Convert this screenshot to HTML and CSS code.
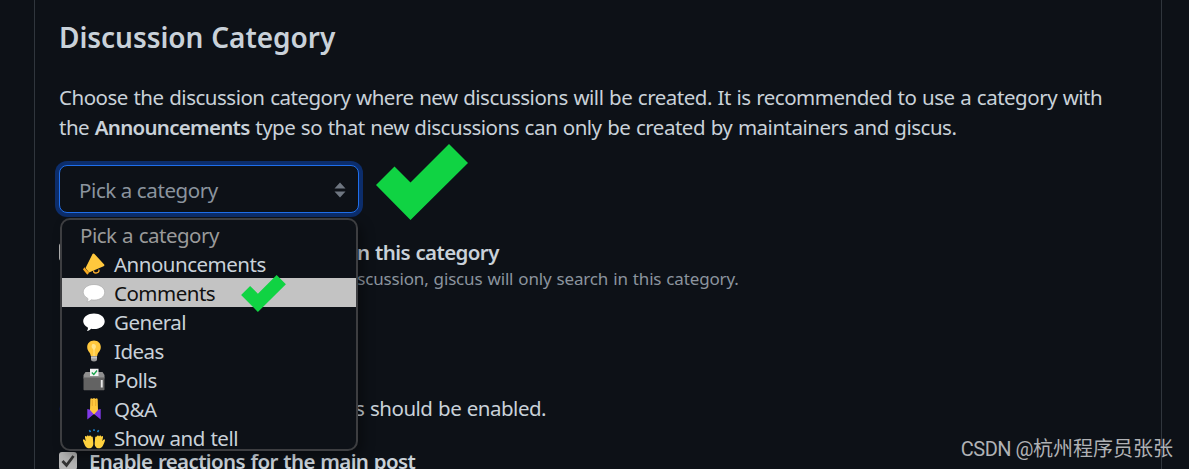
FILE: index.html
```html
<!DOCTYPE html>
<html lang="en">
<head>
    <meta charset="UTF-8">
    <meta name="viewport" content="width=device-width, initial-scale=1.0">
    <title>giscus</title>
    <link rel="stylesheet" href="styles.css">
</head>
<body>
    <main class="container">
        <h2>Discussion Category</h2>
        <p class="intro">
            Choose the discussion category where new discussions will be created. It is recommended to use a category with<br>
            the <strong>Announcements</strong> type so that new discussions can only be created by maintainers and giscus.
        </p>

        <div class="picker">
            <button class="select" type="button">
                <span>Pick a category</span>
                <svg class="arrows" width="12" height="16" viewBox="0 0 12 16"><path d="M0.5 6.5 6 0.5l5.5 6zM0.5 9.5h11L6 15.5z" fill="#6e7681"/></svg>
            </button>
            <ul class="menu">
                <li class="placeholder">Pick a category</li>
                <li>
                    <!-- megaphone -->
                    <svg class="emoji" viewBox="0 0 24 24"><path d="M10.500 2c.5-.8 1.500-.7 2 .1l9.700 10.400c.5.800.2 1.500-.6 1.700L7 20.500 3.500 16z" fill="#ffc83d"/><path d="m2.300 15.200 4.800 5.500-1.800 2L1 17.500z" fill="#f9a91e"/><path d="m11.500 18.500.3 1.700c1.500 1.400 4.600.8 5.200-1.200l-.2-1.500" fill="none" stroke="#ffb02e" stroke-width="1.300"/></svg>
                    <span>Announcements</span>
                </li>
                <li class="active">
                    <svg class="emoji" viewBox="0 0 24 24"><path d="M12 3.500c6 0 10.700 3.400 10.700 7.700 0 4.600-4.700 7.900-10.700 7.900-1 0-2-.1-2.900-.3-1 1.200-2.500 2-4.300 2.100 1-1 1.400-2.200 1-3.500C3 15.900 1.200 13.500 1.200 11.200c0-4.300 4.800-7.700 10.800-7.700z" fill="#fff" stroke="#aaa" stroke-width=".7"/></svg>
                    <span>Comments</span>
                    <svg class="tick small" viewBox="0 0 92 76"><path d="M0 41 18.500 22.500 34.500 38.500 73 0 92 19 34.500 76z" fill="#10d343"/></svg>
                </li>
                <li>
                    <svg class="emoji" viewBox="0 0 24 24"><path d="M12 3.500c6 0 10.700 3.400 10.700 7.700 0 4.600-4.700 7.900-10.700 7.900-1 0-2-.1-2.900-.3-1 1.200-2.500 2-4.300 2.100 1-1 1.400-2.200 1-3.500C3 15.900 1.200 13.500 1.200 11.200c0-4.300 4.800-7.700 10.800-7.700z" fill="#fff"/></svg>
                    <span>General</span>
                </li>
                <li>
                    <!-- light bulb -->
                    <svg class="emoji" viewBox="0 0 24 24"><path d="M12 1.500c4 0 6.800 2.900 6.800 6.500 0 4.200-3.200 5.200-3.600 9H8.800C8.400 13.200 5.200 12.200 5.200 8c0-3.600 2.800-6.500 6.800-6.500z" fill="#ffc83d"/><path d="M10 5.500c2-1 4 0 4 2.500l-1.500 3v6h-1v-6L9.500 8z" fill="#ffe48a"/><path d="M9 17h6v3.500c0 1-1 2-3 2s-3-1-3-2z" fill="#9b9b9b"/><path d="M9 18.800h6" stroke="#d8d8d8"/></svg>
                    <span>Ideas</span>
                </li>
                <li>
                    <!-- ballot box -->
                    <svg class="emoji" viewBox="0 0 24 24"><path d="M1.500 7 3.500 4h17l2 3v3.500h-21z" fill="#8f8f8f"/><path d="M1.500 9.500h21v11.800c0 .6-.4 1-1 1h-19c-.6 0-1-.4-1-1z" fill="#636363"/><path d="M18.800 12h1.900v7.500h-1.900z" fill="#e8e8e8"/><path d="M8 .8h8.500V8H8z" fill="#f2f2f2"/><path d="m9.800 4.500 2 2L15 2.500" fill="none" stroke="#16a34a" stroke-width="1.300"/></svg>
                    <span>Polls</span>
                </li>
                <li>
                    <!-- folded hands -->
                    <svg class="emoji" viewBox="0 0 24 24"><path d="m5.300 12 4 1h5.400l4-1v10.500L12 17l-6.700 5.500z" fill="#8139e8"/><path d="M8.300 2.500c.3-1.500 1.500-1.500 1.900-.4.500-1.200 3.100-1.200 3.600 0 .4-1.100 1.600-1.100 1.900.4l.3 10.500L12 17.500 8 13z" fill="#ffc83d"/><path d="M10.300 3v6M13.700 3v6" stroke="#e39d24" stroke-width=".7"/></svg>
                    <span>Q&amp;A</span>
                </li>
                <li>
                    <!-- raising hands -->
                    <svg class="emoji" viewBox="0 0 24 24"><path id="hand" d="M1.300 15.500c-.9-2.300.4-3 1.300-1.700l1.200 1.400-.8-3.700c-.2-1.500 1.200-1.900 1.800-.6-.2-1.400 1.600-1.900 2.200-.4.200-1.400 1.900-1.300 2.200.2.900-.6 1.500 0 1.600.8l.5 5.500c.2 3.200-1.400 5.300-4.200 5.300-3.200 0-4.200-2.500-5.800-6.800z" fill="#ffd23e"/><use href="#hand" transform="matrix(-1 0 0 1 24 0)"/><path d="M8.500 6 7.300 4.300M12 5V3.200M15.500 6l1.200-1.700" stroke="#1b87d6" stroke-width="1.500"/></svg>
                    <span>Show and tell</span>
                </li>
            </ul>
            <svg class="tick" viewBox="0 0 92 76"><path d="M0 41 18.500 22.500 34.500 38.500 73 0 92 19 34.500 76z" fill="#10d343"/></svg>
        </div>

        <div class="option">
            <span class="checkbox"></span>
            <div>
                <strong class="search-label">Only search for discussions in this category</strong>
                <p class="note">When searching for a matching discussion, giscus will only search in this category.</p>
            </div>
        </div>

        <h2 class="features">Features</h2>
        <p class="features-text">Choose whether specific features should be enabled.</p>

        <div class="option reactions">
            <span class="checkbox"><svg width="18" height="18" viewBox="0 0 18 18"><path d="m3.500 9 4 4.300L14.500 4" fill="none" stroke="#333" stroke-width="2.800"/></svg></span>
            <strong class="reactions-label">Enable reactions for the main post</strong>
        </div>
    </main>
    <div class="watermark"><span>CSDN @</span>杭州程序员张张</div>
</body>
</html>
```
FILE: styles.css
```css
* {
    box-sizing: border-box;
}
body {
    margin: 0;
    height: 469px;
    overflow: hidden;
    background-color: #0d1117;
    color: #c9d1d9;
    font-family: "Noto Sans", "Open Sans", sans-serif;
    font-size: 20.5px;
    line-height: 30px;
    word-spacing: 0.75px;
    white-space: nowrap;
}
.container {
    width: 1128px;
    height: 469px;
    margin-left: 34px;
    padding: 16px 24px 0;
    border: solid #30363d;
    border-width: 0 1px;
    overflow: hidden;
}
h2 {
    margin: 0;
    font-size: 28px;
    font-weight: 600;
    line-height: 42px;
    letter-spacing: -0.05px;
}
p {
    margin: 0;
}
strong {
    font-weight: 600;
}
.intro {
    margin-top: 24px;
    letter-spacing: -0.49px;
}
.intro strong {
    letter-spacing: -0.72px;
}
.picker {
    position: relative;
    display: flex;
    gap: 17px;
    height: 48px;
    margin-top: 23px;
}
.select {
    display: flex;
    justify-content: space-between;
    align-items: center;
    width: 300px;
    height: 48px;
    padding: 1px 12px 0 19px;
    background-color: #0d1117;
    border: 1px solid #1f6feb;
    border-radius: 8px;
    box-shadow: 0 0 0 4px #0c2d6b;
    color: #8b949e;
    font: inherit;
    letter-spacing: -0.4px;
}
.tick {
    flex: none;
    order: 1;
    width: 92px;
    height: 76px;
    margin-top: -21px;
}
.menu {
    position: absolute;
    z-index: 1;
    top: 53px;
    left: 1px;
    width: 298px;
    height: 233px;
    margin: 0;
    padding: 0;
    list-style: none;
    overflow: hidden;
    background-color: #0d1117;
    border: 2px solid #3d3e41;
    border-radius: 10px;
    box-shadow: 5px 5px 12px rgba(0, 0, 0, 0.35);
    letter-spacing: -0.5px;
}
.menu li {
    display: flex;
    align-items: center;
    height: 29px;
    padding-left: 20px;
}
.menu .placeholder {
    padding-left: 18px;
    color: #9a9a9a;
}
.menu .active {
    background-color: #c3c3c3;
    color: #101010;
}
.emoji {
    flex: none;
    width: 24px;
    height: 24px;
    margin: 1px 8px 0 0;
}
.tick.small {
    width: 45px;
    height: 37px;
    margin: 2px 0 0 26px;
}
.option {
    display: flex;
    gap: 12px;
    margin-top: 24px;
}
.checkbox {
    display: flex;
    width: 18px;
    height: 18px;
    margin-top: 6px;
    background-color: #b5b5b5;
    border-radius: 3px;
}
.search-label {
    letter-spacing: -0.6px;
}
.note {
    padding-top: 1px;
    color: #8b949e;
    font-size: 17px;
    line-height: 22px;
    letter-spacing: -0.16px;
}
.features {
    margin-top: 49px;
}
.features-text {
    margin-top: 12px;
    letter-spacing: -0.5px;
}
.reactions {
    margin-top: 23px;
}
.reactions-label {
    letter-spacing: -0.62px;
}
.watermark {
    position: absolute;
    right: 16px;
    bottom: 5px;
    color: #b0b2b5;
    font-family: Roboto, "Noto Sans CJK SC", sans-serif;
    font-size: 20px;
    word-spacing: 0;
}
.watermark span {
    letter-spacing: -0.5px;
}
```
